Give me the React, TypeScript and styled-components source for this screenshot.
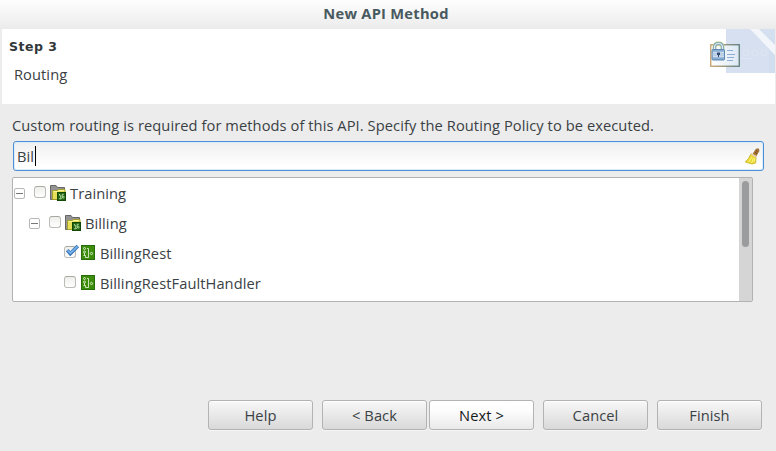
import React from "react";
import styled, { createGlobalStyle } from "styled-components";

const GlobalStyle = createGlobalStyle`
  * { box-sizing: border-box; }
  body { margin: 0; background: #ececec; overflow: hidden; }
`;

const Dialog = styled.div`
  width: 776px;
  height: 451px;
  background: #ececec;
  color: #3a4144;
  font: 14.67px/20px "Open Sans", "Noto Sans", sans-serif;
  letter-spacing: 0.075px;
  white-space: nowrap;
`;

const TitleBar = styled.header`
  height: 29px;
  display: flex;
  justify-content: center;
  padding: 3px 4px 0 0;
  background: linear-gradient(#fefefe, #ebebeb);
  color: #48595f;
  font-weight: bold;
  letter-spacing: 0.26px;
`;

const Banner = styled.section`
  display: flex;
  justify-content: space-between;
  height: 75px;
  margin: 0 1px 0 2px;
  background: #fff;
`;

const BannerText = styled.div`
  padding: 8px 0 0 7px;
`;

const StepName = styled.h1`
  margin: 0;
  font: bold 12.5px/20px "DejaVu Sans", sans-serif;
  letter-spacing: 0.5px;
  color: #30363a;
`;

const StepTopic = styled.div`
  margin: 7px 0 0 5px;
`;

const Body = styled.main`
  display: flex;
  flex-direction: column;
  height: 296px;
  padding: 11px 12px 0;
`;

const Prompt = styled.label`
  height: 20px;
`;

const SearchBox = styled.div`
  display: flex;
  align-items: center;
  justify-content: space-between;
  width: 751px;
  height: 30px;
  margin: 6px 0 0 1px;
  padding: 0 3px;
  border: 1px solid #4a90d9;
  border-radius: 3px;
  background: linear-gradient(#e9edf2, #f2f2f2 4px, #fff 24px);
  box-shadow: inset 0 0 0 1px #deebf8;
`;

const Query = styled.span`
  display: flex;
  align-items: center;
  height: 20px;
`;

const Caret = styled.span`
  width: 1px;
  height: 20px;
  margin-left: 0.6px;
  background: #000;
`;

const Tree = styled.div`
  display: flex;
  width: 741px;
  height: 125px;
  margin-top: 6px;
  border: 1px solid #b2b2b2;
  border-radius: 2px;
  background: #fff;
`;

const Rows = styled.div`
  flex: 1;
  padding-top: 1px;
`;

const Row = styled.div<{ $indent: number }>`
  display: flex;
  align-items: flex-start;
  height: 30px;
  padding-left: ${(p) => p.$indent}px;
`;

const Expander = styled.span`
  display: grid;
  place-items: center;
  width: 11px;
  height: 11px;
  margin: 9px 9px 0 0;
  border: 1px solid #b7b7b7;
  border-radius: 2px;
  background: #fff;
  &::after {
    content: "";
    width: 7px;
    height: 1px;
    background: #777;
  }
`;

const CheckBox = styled.span`
  display: block;
  width: 12px;
  height: 12px;
  margin: 7px 4px 0 0;
  border: 1px solid #bcbcb6;
  border-top-color: #a5a99e;
  border-radius: 3px;
  background: linear-gradient(#eeeeec, #fff);
  svg { display: block; margin: -3px 0 0 0; overflow: visible; }
`;

const TreeIcon = styled.svg<{ $top: number; $left: number; $gap: number }>`
  display: block;
  flex: none;
  margin: ${(p) => p.$top}px ${(p) => p.$gap}px 0 ${(p) => p.$left}px;
`;

const RowText = styled.span`
  padding-top: 4px;
`;

const ScrollTrack = styled.div`
  width: 13px;
  padding: 3px 0 0 3px;
  background: #d5d5d5;
`;

const ScrollThumb = styled.div`
  width: 7px;
  height: 66px;
  border-radius: 4px;
  background: #9a9c9d;
`;

const ButtonBar = styled.footer`
  display: flex;
  padding-left: 208px;
`;

const Button = styled.button<{ $gap?: number; $primary?: boolean }>`
  width: 105px;
  height: 30px;
  margin: 0 ${(p) => p.$gap ?? 0}px 0 0;
  padding: 0 0 1px;
  border: 1px solid #b3b3b3;
  border-radius: 3px;
  background: ${(p) =>
    p.$primary ? "linear-gradient(#fff, #fdfdfd 35%, #e9e9e9)" : "linear-gradient(#f8f8f8, #d9d9d9)"};
  box-shadow: inset 0 1px #fff, 0 1px #f6f6f6;
  color: ${(p) => (p.$primary ? "#15191b" : "#3a4144")};
  font: inherit;
  letter-spacing: 0.075px;
`;

const BannerPicture = styled.svg`
  display: block;
  overflow: visible;
`;

const BannerArt = () => (
  <BannerPicture width="66" height="44" viewBox="0 0 66 44">
    <defs>
      <linearGradient id="card" x1="0" x2="1">
        <stop offset="0" stopColor="#fff" />
        <stop offset="1" stopColor="#dce8f5" />
      </linearGradient>
      <linearGradient id="cardEdge" x1="0" x2="1">
        <stop offset="0" stopColor="#c3a16a" />
        <stop offset="1" stopColor="#5a7b77" />
      </linearGradient>
      <linearGradient id="lock" x1="0" x2="0" y1="0" y2="1">
        <stop offset="0" stopColor="#7fa4cc" />
        <stop offset=".5" stopColor="#c3d6eb" />
        <stop offset="1" stopColor="#769fc9" />
      </linearGradient>
    </defs>
    <path d="M17 0H66V44H17Z" fill="#d2deef" />
    <path d="M17 0H42L60 18V44H17Z" fill="#d6e0f0" />
    <path d="M50 0H66V13Z" fill="#d4dfef" />
    <path d="M41 0H50L66 16V26Z" fill="#f2f5fa" />
    <g fill="none" stroke="#e2e9f4" opacity=".75">
      <circle cx="37" cy="24" r="3" /><circle cx="46" cy="24" r="3" />
      <circle cx="55" cy="24" r="3" />
      <path d="M31 29.5H43" />
    </g>
    <g transform="translate(1 0)">
      <rect x=".75" y="15.75" width="28.5" height="21.5" fill="url(#card)" stroke="url(#cardEdge)" strokeWidth="1.3" />
      <path d="M17 21.5H23M17 25.5H25M17 28.5H24M17 31.5H23" stroke="#8facd4" />
      <path d="M4.5 22V18.5Q4.5 14.5 8.5 14.5T12.5 18.5V22" fill="none" stroke="#b6cc83" strokeWidth="3.8" />
      <path d="M4.5 22V18.5Q4.5 14.5 8.5 14.5T12.5 18.5V22" fill="none" stroke="#7b9fbc" strokeWidth="2.7" />
      <path d="M4.5 22V18.5Q4.5 14.5 8.5 14.5T12.5 18.5V22" fill="none" stroke="#e2edf6" strokeWidth="1.2" />
      <rect x="2" y="20.5" width="12.5" height="10.5" rx="1" fill="url(#lock)" stroke="#5c89b5" />
      <path d="M3 23.5H14M3 27.5H14" stroke="#dce8f3" opacity=".7" />
      <path d="M7 23.5H10V26H9V28H8V26H7Z" fill="#344a73" />
    </g>
  </BannerPicture>
);

const Broom = () => (
  <svg width="16" height="17" viewBox="0 0 16 17">
    <path d="M9 6L12 1.2L14.5 .8L15 3L12 8Z" fill="#b67b31" stroke="#865922" strokeWidth=".7" />
    <path d="M12 2.5L13.5 3.5M11 4.5L13 5.5" stroke="#58402a" />
    <path d="M7 5.8L12 9Q12 13 11.5 15L8 16L1.3 14Q5 11 7 5.8Z" fill="#eadb39" stroke="#c7ae20" strokeWidth=".8" />
    <path d="M8 9L4.5 14M9.5 10L7.5 15M11 10L10 14" stroke="#fff47b" />
    <path d="M6.5 5.5L12.5 9" stroke="#e6cfae" strokeWidth="2" />
  </svg>
);

const FolderIcon = () => (
  <TreeIcon $top={6} $left={0} $gap={4} width="16" height="16" viewBox="0 0 16 16">
    <path d="M.5 14.5V.5H6L7.5 2.5H14.5V14.5Z" fill="#939393" stroke="#666" />
    <path d="M2.5 14.5V5.5H7L8.5 4.5H15V14.5Z" fill="#e6df57" stroke="#a5a02c" />
    <path d="M3.5 6.5H7.5L9 5.5H14" fill="none" stroke="#f8f59b" />
    <rect x="7.5" y="7.5" width="8" height="8" fill="#246514" stroke="#124706" />
    <g fill="none" stroke="#b9dfa4" strokeWidth=".9">
      <path d="M9.5 9V10.3H10.7V12.3L9.5 13.8H11.2L12.2 12.5V9.3H13.8" />
      <circle cx="13.3" cy="12.2" r=".9" />
    </g>
  </TreeIcon>
);

const PolicyIcon = () => (
  <TreeIcon $top={6} $left={1} $gap={5} width="14" height="15" viewBox="0 0 14 15">
    <rect x=".5" y=".5" width="13" height="14" fill="#3d8d0c" stroke="#286c0b" />
    <g fill="none" stroke="#e4f3d8" strokeWidth=".85">
      <circle cx="3.5" cy="3.5" r="1" />
      <circle cx="3.5" cy="7" r="1" />
      <path d="M3.5 8V10.5M2.5 10.5H4.5V12.5H7.5V3.5H6" />
      <circle cx="10.5" cy="8.5" r="1.1" />
    </g>
  </TreeIcon>
);

const Check = () => (
  <svg width="15" height="13" viewBox="0 0 15 13">
    <path d="M2.2 6.2L5.3 9.7L12.8 2" fill="none" stroke="#316eb1" strokeWidth="3.5" />
    <path d="M2.5 6.3L5.4 9.2L12.5 2.3" fill="none" stroke="#74afea" strokeWidth="1.9" />
  </svg>
);

type Item = { label: string; indent: number; folder?: boolean; checked?: boolean };

const items: Item[] = [
  { label: "Training", indent: 1, folder: true },
  { label: "Billing", indent: 16, folder: true },
  { label: "BillingRest", indent: 51, checked: true },
  { label: "BillingRestFaultHandler", indent: 51 },
];

export default function App() {
  return (
    <>
      <GlobalStyle />
      <Dialog>
        <TitleBar>New API Method</TitleBar>
        <Banner>
          <BannerText>
            <StepName>Step 3</StepName>
            <StepTopic>Routing</StepTopic>
          </BannerText>
          <BannerArt />
        </Banner>
        <Body>
          <Prompt>Custom routing is required for methods of this API. Specify the Routing Policy to be executed.</Prompt>
          <SearchBox>
            <Query>Bil<Caret /></Query>
            <Broom />
          </SearchBox>
          <Tree>
            <Rows>
              {items.map((item) => (
                <Row key={item.label} $indent={item.indent}>
                  {item.folder && <Expander />}
                  <CheckBox>{item.checked && <Check />}</CheckBox>
                  {item.folder ? <FolderIcon /> : <PolicyIcon />}
                  <RowText>{item.label}</RowText>
                </Row>
              ))}
            </Rows>
            <ScrollTrack><ScrollThumb /></ScrollTrack>
          </Tree>
        </Body>
        <ButtonBar>
          <Button $gap={9}>Help</Button>
          <Button $gap={2}>&lt; Back</Button>
          <Button $gap={9} $primary>Next &gt;</Button>
          <Button $gap={9}>Cancel</Button>
          <Button>Finish</Button>
        </ButtonBar>
      </Dialog>
    </>
  );
}
